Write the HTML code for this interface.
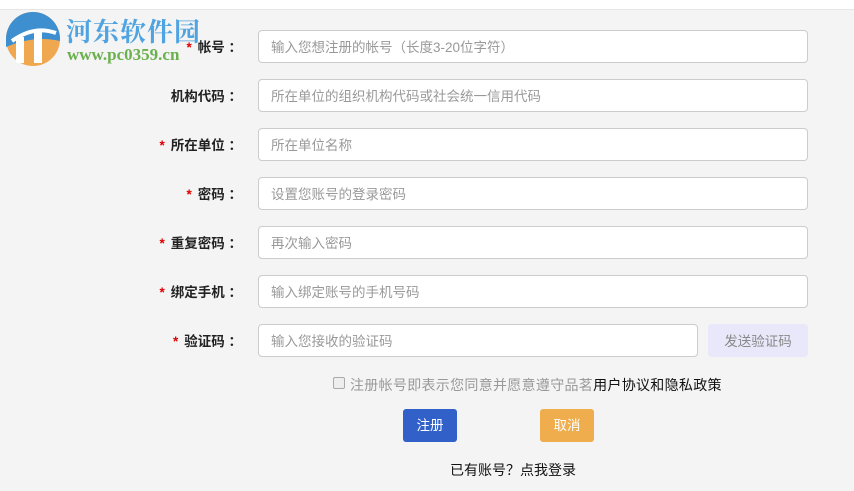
<!DOCTYPE html>
<html><head><meta charset="utf-8"><style>
*{margin:0;padding:0;box-sizing:border-box}
body{width:854px;height:491px;background:#f4f4f4;font-family:"Liberation Sans","Noto Sans CJK SC",sans-serif;position:relative;overflow:hidden;font-size:13px}
.top{position:absolute;left:0;top:0;width:854px;height:10px;background:#fff;border-bottom:1px solid #e6e6e6}
.lab{position:absolute;right:612px;width:200px;text-align:right;font-weight:bold;color:#222;font-size:13.5px;line-height:35px}
.lab i{color:#d00;font-style:normal;margin-right:6px}
.in{position:absolute;left:258px;width:550px;height:33px;border:1px solid #ccc;border-radius:4px;background:#fff;color:#999;font-size:13.5px;line-height:33px;padding-left:12px}
.btn{position:absolute;top:409px;width:54px;height:33px;border-radius:3px;color:#fff;text-align:center;line-height:33px;font-size:13.5px}
</style></head><body>
<div class="top"></div>
<svg style="position:absolute;left:4px;top:11px" width="60" height="56" viewBox="0 0 60 56">
<circle cx="29" cy="28" r="27" fill="#f0a850"/>
<path d="M2 28 A27 27 0 0 1 56 28 L56 30 Q30 24 2 36Z" fill="#3d8fd0"/>
<rect x="12" y="26" width="8" height="26" fill="#fff"/><rect x="30" y="20" width="8" height="32" fill="#fff"/>
<path d="M8 30 Q30 14 52 22" stroke="#fff" stroke-width="4" fill="none"/>
</svg>
<div style="position:absolute;left:66px;top:12px;font-size:26px;font-weight:bold;color:#4fa3e0;font-family:'Noto Serif CJK SC',serif;letter-spacing:1px">河东软件园</div>
<div style="position:absolute;left:67px;top:45px;font-size:17px;font-weight:bold;color:#6ab04c;font-family:'Liberation Serif',serif">www.pc0359.cn</div>

<div class="lab" style="top:30px"><i>*</i>帐号 ：</div><div class="in" style="top:30px">输入您想注册的帐号（长度3-20位字符）</div>
<div class="lab" style="top:79px">机构代码 ：</div><div class="in" style="top:79px">所在单位的组织机构代码或社会统一信用代码</div>
<div class="lab" style="top:128px"><i>*</i>所在单位 ：</div><div class="in" style="top:128px">所在单位名称</div>
<div class="lab" style="top:177px"><i>*</i>密码 ：</div><div class="in" style="top:177px">设置您账号的登录密码</div>
<div class="lab" style="top:226px"><i>*</i>重复密码 ：</div><div class="in" style="top:226px">再次输入密码</div>
<div class="lab" style="top:275px"><i>*</i>绑定手机 ：</div><div class="in" style="top:275px">输入绑定账号的手机号码</div>
<div class="lab" style="top:324px"><i>*</i>验证码 ：</div><div class="in" style="top:324px;width:440px">输入您接收的验证码</div>
<div style="position:absolute;left:708px;top:324px;width:100px;height:33px;background:#e8e8fa;border-radius:4px;color:#888;text-align:center;line-height:35px;font-size:13.5px">发送验证码</div>

<div style="position:absolute;left:333px;top:377px;width:12px;height:12px;border:1px solid #aaa;border-radius:2px;background:#eee"></div>
<div style="position:absolute;left:350px;top:375px;color:#999;font-size:14px;letter-spacing:0.3px">注册帐号即表示您同意并愿意遵守品茗<span style="color:#111">用户协议和隐私政策</span></div>
<div class="btn" style="left:403px;background:#3060c8">注册</div>
<div class="btn" style="left:540px;background:#f0ad4e">取消</div>
<div style="position:absolute;left:450px;top:460px;color:#111;font-size:14px">已有账号？点我登录</div>
</body></html>
